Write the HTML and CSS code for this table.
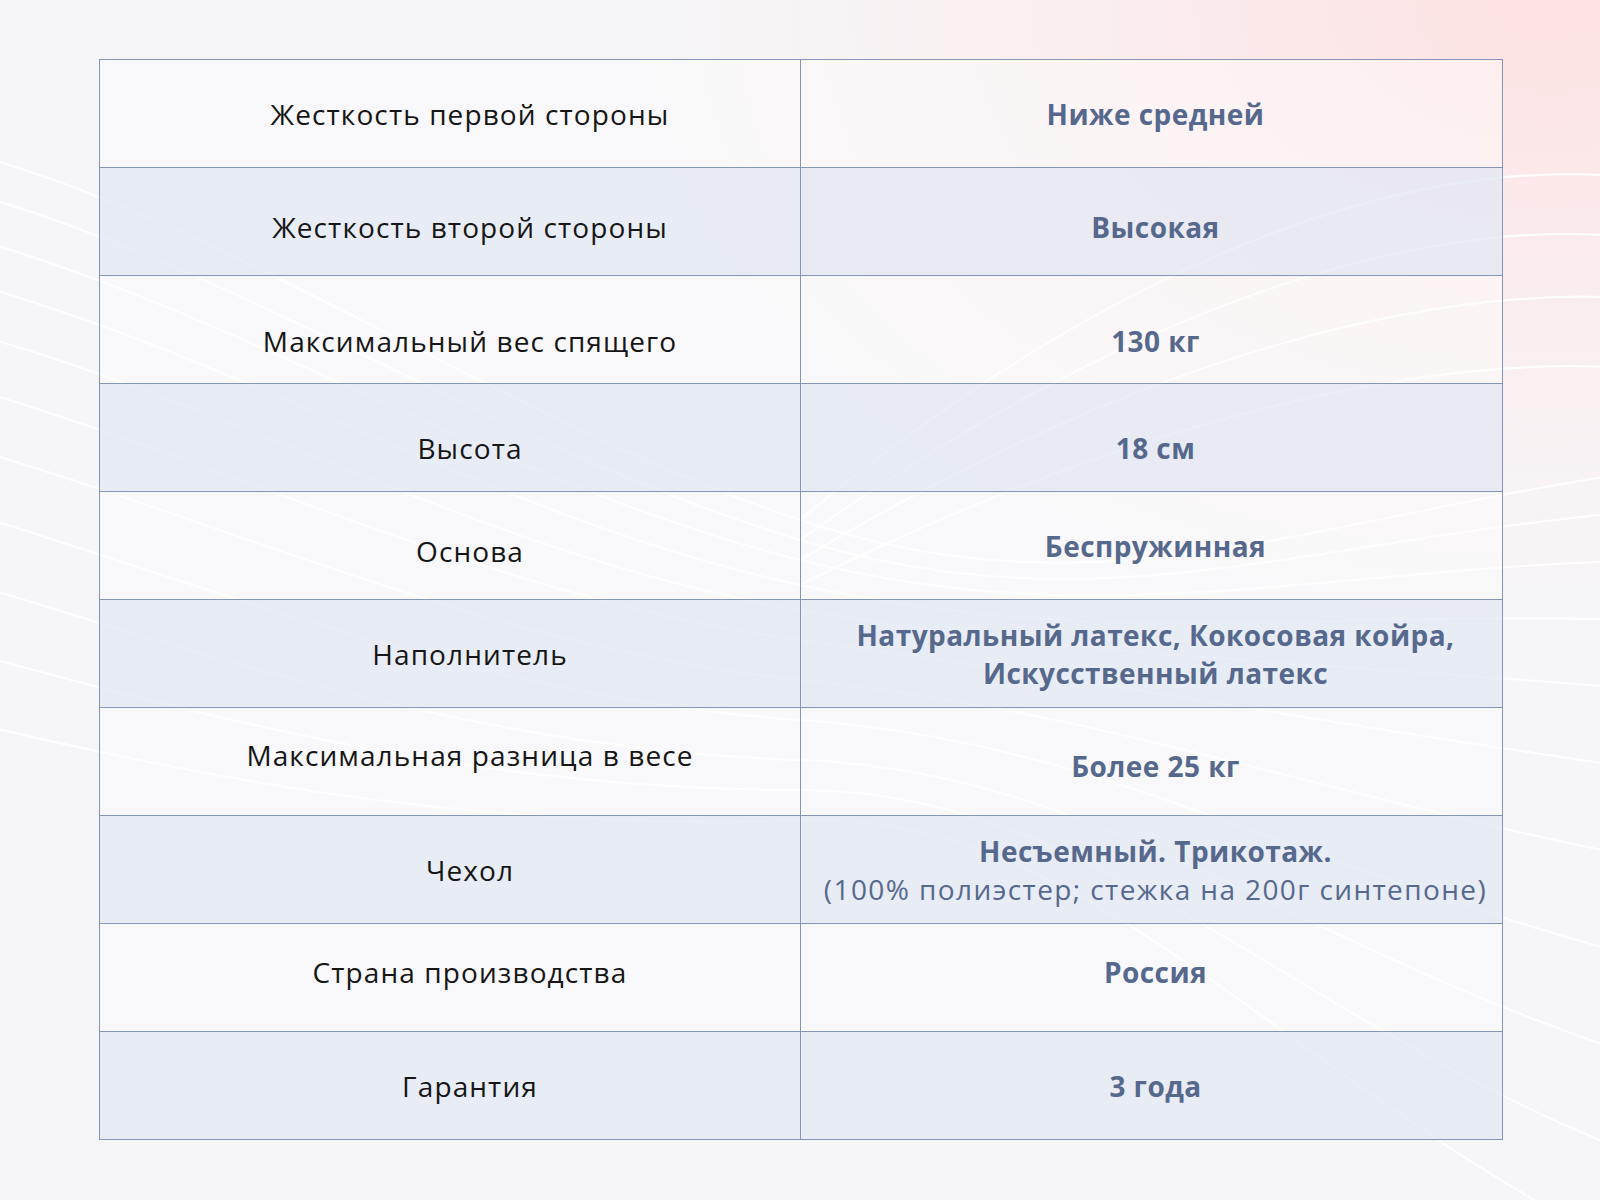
FILE: index.html
```html
<!DOCTYPE html>
<html lang="ru">
<head>
<meta charset="utf-8">
<title>Характеристики</title>
<link rel="stylesheet" href="styles.css">
</head>
<body>
<svg class="bg-lines" width="1600" height="1200" viewBox="0 0 1600 1200" aria-hidden="true">
  <g fill="none" stroke="#ffffff" stroke-width="2.2" opacity="0.9">
    <path d="M-40 150 C 250 230, 500 420, 800 520 S 1300 520, 1650 470"/>
    <path d="M-40 190 C 250 270, 500 450, 800 540 S 1300 540, 1650 510"/>
    <path d="M-40 235 C 250 315, 500 485, 800 560 S 1300 570, 1650 560"/>
    <path d="M-40 280 C 250 360, 500 520, 800 585 S 1300 610, 1650 620"/>
    <path d="M-40 330 C 250 410, 500 560, 800 610 S 1300 660, 1650 690"/>
    <path d="M-40 385 C 250 470, 500 600, 800 640 S 1300 720, 1650 770"/>
    <path d="M-40 445 C 250 530, 500 650, 800 680 S 1300 790, 1650 860"/>
    <path d="M-40 510 C 250 600, 500 700, 800 720 S 1300 870, 1650 960"/>
    <path d="M-40 580 C 250 670, 500 750, 800 760 S 1300 950, 1650 1060"/>
    <path d="M-40 650 C 250 730, 500 790, 800 790 S 1300 1030, 1650 1160"/>
    <path d="M-40 720 C 250 790, 500 830, 800 820 S 1300 1100, 1650 1260"/>
    <path d="M1650 180 C 1450 150, 1150 230, 800 520"/>
    <path d="M1650 240 C 1450 210, 1150 290, 800 540"/>
    <path d="M1650 300 C 1450 280, 1150 350, 800 560"/>
    <path d="M1650 370 C 1450 350, 1150 410, 800 585"/>
  </g>
</svg>
<main class="page">
  <table class="specs">
    <colgroup>
      <col class="col-name">
      <col class="col-value">
    </colgroup>
    <tbody>
      <tr class="row-light"><td class="name">Жесткость первой стороны</td><td class="value">Ниже средней</td></tr>
      <tr class="row-dark down-5"><td class="name">Жесткость второй стороны</td><td class="value">Высокая</td></tr>
      <tr class="row-light down-11"><td class="name">Максимальный вес спящего</td><td class="value">130 кг</td></tr>
      <tr class="row-dark down-10"><td class="name">Высота</td><td class="value">18 см</td></tr>
      <tr class="row-light"><td class="name down-5">Основа</td><td class="value">Беспружинная</td></tr>
      <tr class="row-dark"><td class="name">Наполнитель</td><td class="value">Натуральный латекс, Кокосовая койра,<br>Искусственный латекс</td></tr>
      <tr class="row-light"><td class="name up-7">Максимальная разница в весе</td><td class="value down-4">Более 25 кг</td></tr>
      <tr class="row-dark"><td class="name">Чехол</td><td class="value">Несъемный. Трикотаж.<br><span class="note">(100% полиэстер; стежка на 200г синтепоне)</span></td></tr>
      <tr class="row-light up-6"><td class="name">Страна производства</td><td class="value">Россия</td></tr>
      <tr class="row-dark"><td class="name">Гарантия</td><td class="value">3 года</td></tr>
    </tbody>
  </table>
</main>
</body>
</html>
```
FILE: styles.css
```css
html, body {
  margin: 0;
  padding: 0;
}
body {
  width: 1600px;
  height: 1200px;
  overflow: hidden;
  position: relative;
  font-family: "Open Sans", "Noto Sans", sans-serif;
  background:
    radial-gradient(ellipse 1150px 780px at 1550px 0px, rgba(255, 224, 224, 0.9), rgba(255, 230, 230, 0.35) 50%, rgba(255, 232, 232, 0) 80%),
    #f6f6f8;
}
.bg-lines {
  position: absolute;
  left: 0;
  top: 0;
  z-index: 0;
}
.page {
  position: relative;
  z-index: 1;
  padding: 59px 0 0 99px;
}
.specs {
  width: 1403px;
  border-collapse: collapse;
  table-layout: fixed;
  border: 1px solid #8595b8;
}
.col-name {
  width: 701px;
}
.col-value {
  width: 702px;
}
.specs tr {
  height: 108px;
}
.specs td {
  border: 1px solid #8595b8;
  padding: 0;
  text-align: center;
  vertical-align: middle;
  font-size: 28px;
  line-height: 38px;
}
.row-light td {
  background: rgba(255, 255, 255, 0.4);
}
.row-dark td {
  background: rgba(226, 231, 242, 0.72);
}
.name {
  color: #161616;
  font-weight: 400;
  letter-spacing: 1.1px;
}
.specs td.name {
  padding-left: 40px;
}
.specs td.value {
  padding-left: 8px;
}
.value {
  color: #56698d;
  font-weight: 700;
  letter-spacing: 0.45px;
}
.note {
  font-weight: 400;
  letter-spacing: 1.4px;
}
.specs .down-4, .specs .down-4 td { padding-top: 8px; }
.specs .down-5, .specs .down-5 td { padding-top: 10px; }
.specs .down-10 td { padding-top: 20px; }
.specs .down-11 td { padding-top: 22px; }
.specs .up-6 td { padding-bottom: 12px; }
.specs .up-7 { padding-bottom: 14px; }
```
